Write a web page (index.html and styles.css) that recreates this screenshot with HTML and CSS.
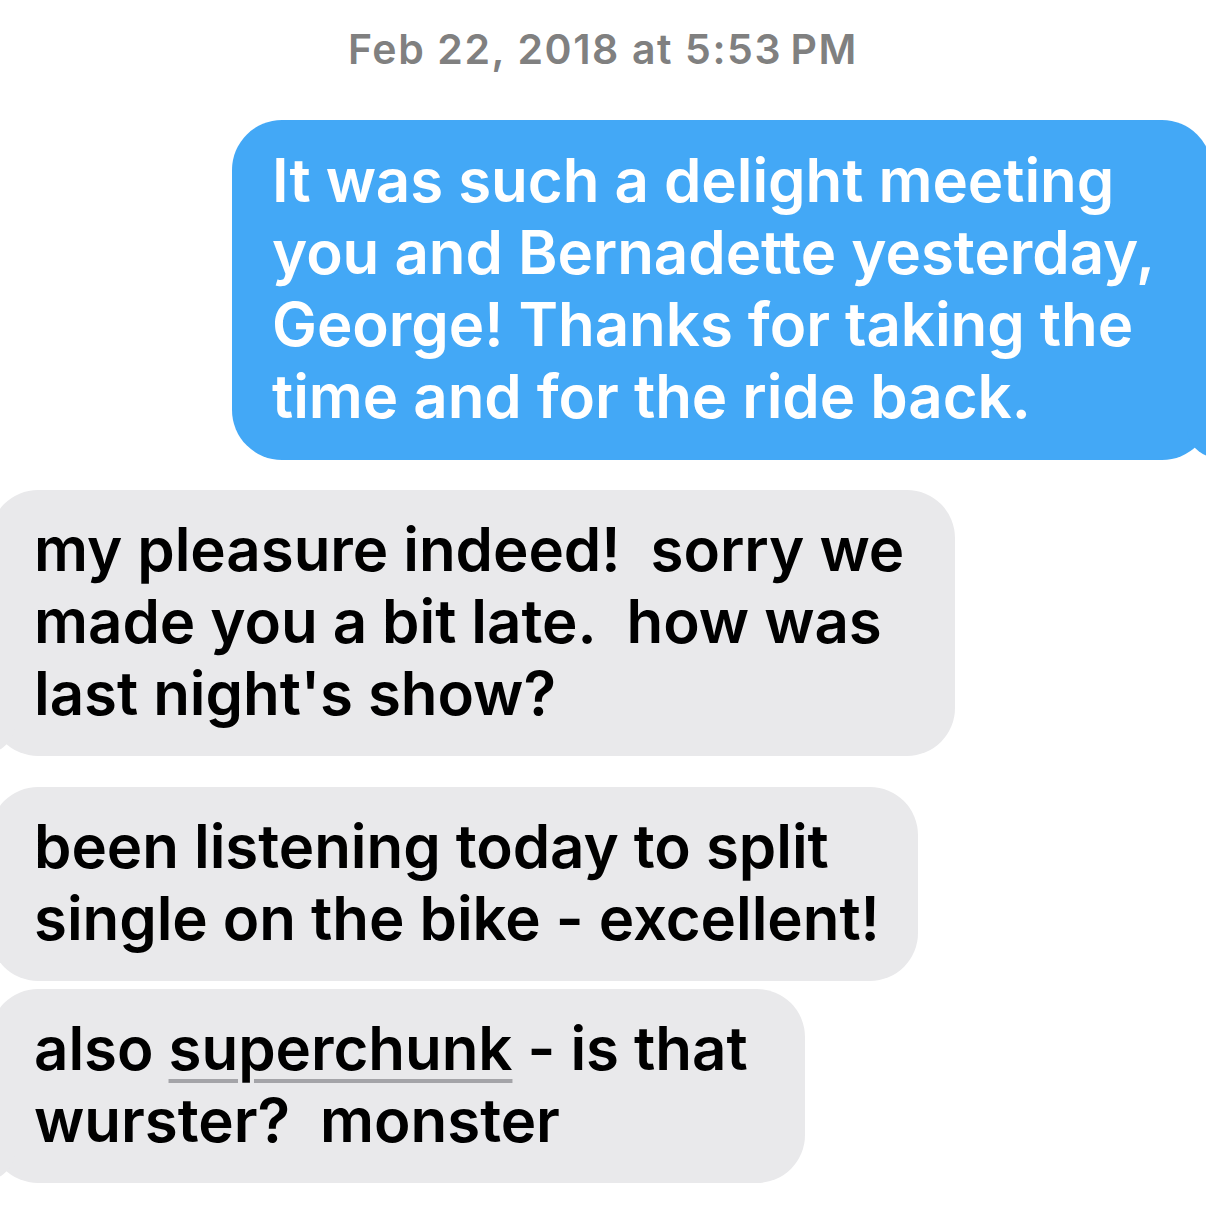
FILE: index.html
```html
<!DOCTYPE html>
<html>
<head>
  <title>Messages</title>
  <meta charset="utf-8">
  <meta name="viewport" content="width=device-width, initial-scale=1">
  <link rel="stylesheet" href="styles.css">
</head>
<body>
  <!-- thread -->
  <div class="thread">
    <p class="stamp">Feb 22, 2018 at 5:53&#8239;PM</p>

    <div class="bubble sent tail">It was such a delight meeting<br>you and Bernadette yesterday,<br>George! Thanks for taking the<br>time and for the ride back.</div>

    <div class="bubble recv tail first">my pleasure indeed!&nbsp; sorry we<br>made you a bit late.&nbsp; how was<br>last night's show?</div>

    <div class="bubble recv second">been listening today to split<br>single on the bike - excellent!</div>

    <div class="bubble recv tail third">also <span class="link">superchunk</span> - is that<br>wurster?&nbsp; monster</div>
  </div>
  <!-- end of thread -->
</body>
</html>
```

FILE: styles.css
```css
html,
body {
  margin: 0;
  overflow: hidden;
  background: #fff;
}
.thread {
  display: flex;
  flex-direction: column;
  width: 1206px;
  font-family: "Inter", "Noto Sans", sans-serif;
}
.stamp {
  margin: 0;
  padding-top: 25px;
  text-align: center;
  font-size: 41px;
  line-height: 48px;
  font-weight: 600;
  letter-spacing: 1.6px;
  color: #808080;
}
.bubble {
  position: relative;
  z-index: 0;
  box-sizing: border-box;
  padding: 24px 0 28px;
  font-size: 60px;
  line-height: 72px;
  font-weight: 600;
  letter-spacing: -0.05px;
  white-space: nowrap;
  border-radius: 50px;
}
.sent {
  align-self: flex-start;
  width: 980px;
  margin: 47px 0 0 232px;
  padding-left: 40px;
  background: #43a8f6;
  color: #fff;
}
.recv {
  align-self: flex-start;
  margin-left: -10px;
  padding: 23px 0 27px 44px;
  background: #e9e9eb;
  color: #000;
  border-radius: 48px;
}
.first {
  width: 965px;
  margin-top: 30px;
}
.second {
  width: 928px;
  margin-top: 31px;
}
.third {
  width: 815px;
  margin-top: 8px;
}
.link {
  text-decoration: underline;
  text-decoration-color: #a4a4a8;
  text-decoration-thickness: 4px;
  text-underline-offset: 9px;
}

/* bubble tails */
.tail::before,
.tail::after {
  content: "";
  position: absolute;
  bottom: 0;
  z-index: -1;
  height: 60px;
}
.recv.tail::before {
  left: -45px;
  width: 70px;
  background: #e9e9eb;
  border-bottom-right-radius: 40px 30px;
}
.recv.tail::after {
  left: -65px;
  width: 65px;
  background: #fff;
  border-bottom-right-radius: 25px 35px;
}
.sent.tail::before {
  right: -45px;
  width: 70px;
  background: #43a8f6;
  border-bottom-left-radius: 40px 30px;
}
.sent.tail::after {
  right: -65px;
  width: 65px;
  background: #fff;
  border-bottom-left-radius: 25px 35px;
}
```
